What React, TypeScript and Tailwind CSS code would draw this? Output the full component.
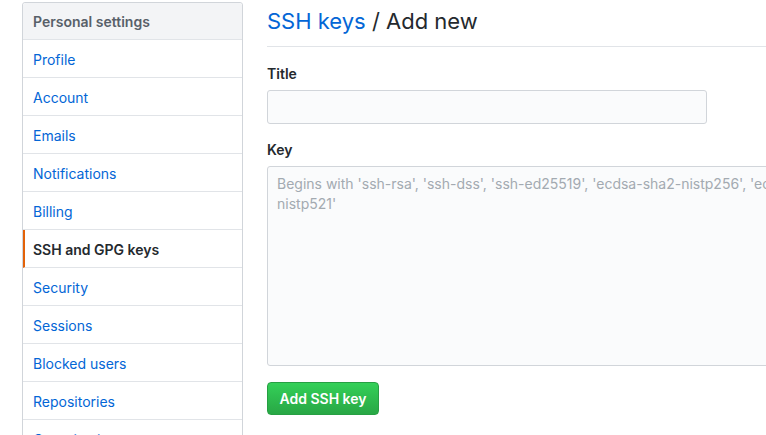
import React from "react";

const items = [
  "Profile",
  "Account",
  "Emails",
  "Notifications",
  "Billing",
  "SSH and GPG keys",
  "Security",
  "Sessions",
  "Blocked users",
  "Repositories",
  "Organizations",
];

export default function App() {
  return (
    <div
      className="w-[766px] h-[435px] overflow-hidden bg-white flex items-start text-[14px] text-[#24292e]"
      style={{ fontFamily: 'Inter, "Liberation Sans", Arial, sans-serif' }}
    >
      <nav className="ml-[22px] mt-[2px] w-[221px] shrink-0 border border-[#d1d5da] rounded-[3px]">
        <div className="h-[37px] flex items-center px-[10px] bg-[#f3f4f6] border-b border-[#e1e4e8] font-semibold text-[#586069] rounded-t-[3px]">
          Personal settings
        </div>
        {items.map((it) => {
          const active = it === "SSH and GPG keys";
          return (
            <div
              key={it}
              className={
                active
                  ? "h-[38px] flex items-center pl-[8px] pt-[1px] border-l-2 border-l-[#e36209] border-b border-b-[#e1e4e8] font-semibold text-[#24292e]"
                  : "h-[38px] flex items-center pl-[10px] pt-[1px] border-b border-[#e1e4e8] text-[#0366d6]"
              }
            >
              {it}
            </div>
          );
        })}
      </nav>
      <main className="ml-[24px] w-[900px] shrink-0">
        <div className="pt-[3px] pb-[7px] border-b border-[#e1e4e8]">
          <h1 className="text-[22px] leading-[36px] font-normal">
            <span className="text-[#0366d6]">SSH keys</span> / Add new
          </h1>
        </div>
        <div className="mt-[17px] font-semibold leading-[20px]">Title</div>
        <input
          className="mt-[6px] block w-[440px] h-[34px] bg-[#fafbfc] border border-[#d1d5da] rounded-[3px] outline-none"
          type="text"
        />
        <div className="mt-[16px] font-semibold leading-[20px]">Key</div>
        <textarea
          className="mt-[6px] block w-[900px] h-[200px] bg-[#fafbfc] border border-[#d1d5da] rounded-[3px] px-[9px] py-[7px] leading-[20px] text-[14px] resize-none outline-none placeholder:text-[#a3aab1]"
          placeholder={"Begins with 'ssh-rsa', 'ssh-dss', 'ssh-ed25519', 'ecdsa-sha2-nistp256', 'ecdsa-sha2-nistp384', or 'ecdsa-sha2-\nnistp521'"}
        />
        <button className="mt-[16px] h-[33px] w-[112px] rounded-[4px] border border-[#279f43] bg-gradient-to-b from-[#34d058] to-[#28a745] text-white font-semibold text-[14px]">
          Add SSH key
        </button>
      </main>
    </div>
  );
}
